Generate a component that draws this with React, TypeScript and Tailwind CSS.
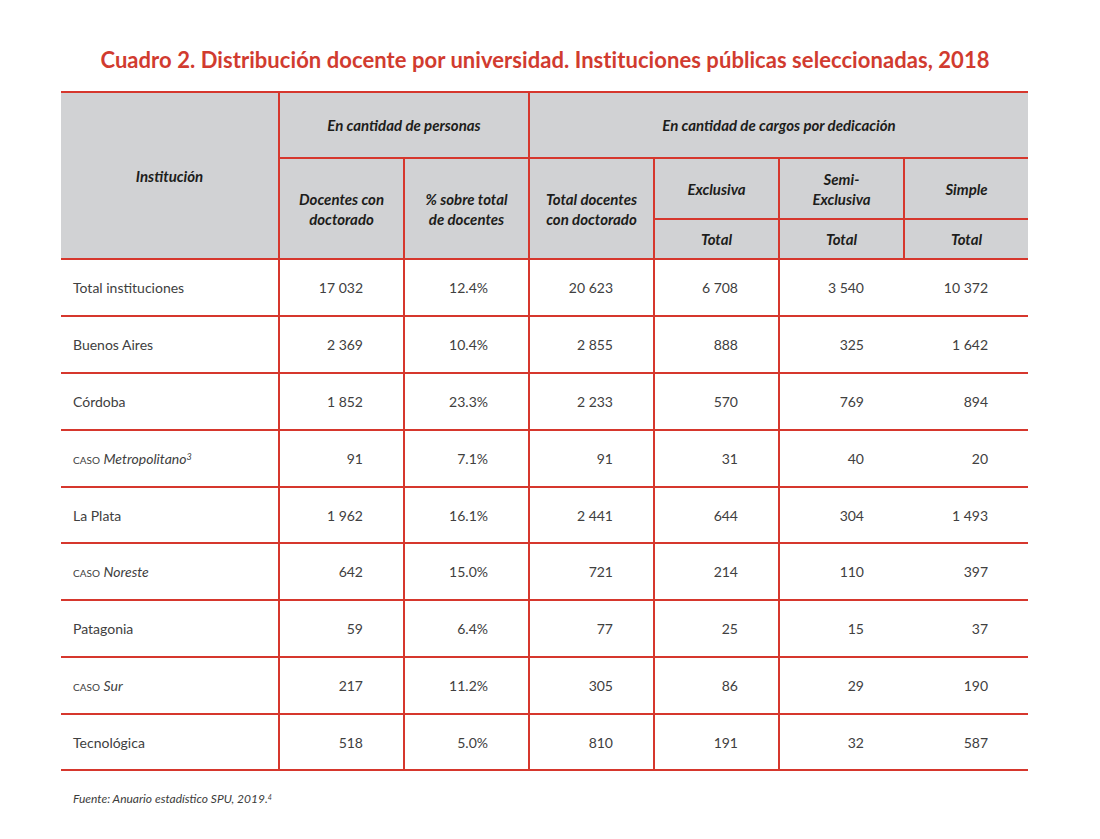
import React from "react";

const B = "border-[#d6372d]";

type Row = { name: React.ReactNode; v: string[]; h: string };

const Caso = ({ t, sup }: { t: string; sup?: string }) => (
  <span>
    <span className="[font-variant:small-caps]">caso</span>{" "}
    <span className="italic">{t}</span>
    {sup && <sup className="text-[9px] italic">{sup}</sup>}
  </span>
);

const rows: Row[] = [
  { name: "Total instituciones", v: ["17 032", "12.4%", "20 623", "6 708", "3 540", "10 372"], h: "h-[57px]" },
  { name: "Buenos Aires", v: ["2 369", "10.4%", "2 855", "888", "325", "1 642"], h: "h-[57px]" },
  { name: "Córdoba", v: ["1 852", "23.3%", "2 233", "570", "769", "894"], h: "h-[57px]" },
  { name: <Caso t="Metropolitano" sup="3" />, v: ["91", "7.1%", "91", "31", "40", "20"], h: "h-[57px]" },
  { name: "La Plata", v: ["1 962", "16.1%", "2 441", "644", "304", "1 493"], h: "h-[56px]" },
  { name: <Caso t="Noreste" />, v: ["642", "15.0%", "721", "214", "110", "397"], h: "h-[57px]" },
  { name: "Patagonia", v: ["59", "6.4%", "77", "25", "15", "37"], h: "h-[57px]" },
  { name: <Caso t="Sur" />, v: ["217", "11.2%", "305", "86", "29", "190"], h: "h-[57px]" },
  { name: "Tecnológica", v: ["518", "5.0%", "810", "191", "32", "587"], h: "h-[56px]" },
];

export default function App() {
  const th = `border-y-2 ${B} bg-[#d1d2d4] text-center align-middle font-bold italic text-[15px] leading-[20px] text-[#1d1d1b] px-2`;
  return (
    <div className="w-[1100px] min-h-[839px] bg-white pt-[47px] font-['Lato',sans-serif]">
      <h1 className="pr-[10px] text-center text-[22px] leading-[26px] font-bold tracking-[0.06px] text-[#d13b2f]">
        Cuadro 2. Distribución docente por universidad. Instituciones públicas seleccionadas, 2018
      </h1>
      <table className="ml-[61px] mt-[18px] w-[967px] table-fixed border-collapse">
        <colgroup>
          <col className="w-[218px]" />
          <col className="w-[125px]" />
          <col className="w-[125px]" />
          <col className="w-[125px]" />
          <col className="w-[125px]" />
          <col className="w-[125px]" />
          <col className="w-[124px]" />
        </colgroup>
        <thead>
          <tr className="h-[66px]">
            <th rowSpan={3} className={`${th} border-r-2`}>Institución</th>
            <th colSpan={2} className={`${th} border-r-2`}>En cantidad de personas</th>
            <th colSpan={4} className={th}>En cantidad de cargos por dedicación</th>
          </tr>
          <tr className="h-[61px]">
            <th rowSpan={2} className={`${th} border-r-2`}>Docentes con<br />doctorado</th>
            <th rowSpan={2} className={`${th} border-r-2`}>% sobre total<br />de docentes</th>
            <th rowSpan={2} className={`${th} border-r-2`}>Total docentes<br />con doctorado</th>
            <th className={`${th} border-r-2`}>Exclusiva</th>
            <th className={`${th} border-r-2`}>Semi-<br />Exclusiva</th>
            <th className={th}>Simple</th>
          </tr>
          <tr className="h-[40px]">
            <th className={`${th} border-r-2`}>Total</th>
            <th className={`${th} border-r-2`}>Total</th>
            <th className={th}>Total</th>
          </tr>
        </thead>
        <tbody>
          {rows.map((r, i) => (
            <tr key={i} className={r.h}>
              <td className={`border-y-2 border-r-2 ${B} pl-[12px] text-left text-[14px] text-[#404040]`}>{r.name}</td>
              {r.v.map((x, j) => (
                <td
                  key={j}
                  className={`border-y-2 ${j < 4 ? "border-r-2" : ""} ${B} pr-[40px] text-right text-[14px] text-[#404040]`}
                >
                  {x}
                </td>
              ))}
            </tr>
          ))}
        </tbody>
      </table>
      <p className="ml-[73px] mt-[19px] text-[12px] italic text-[#3c3c3b]">
        Fuente: Anuario estadístico SPU, 2019.<sup className="text-[7px]">4</sup>
      </p>
    </div>
  );
}
